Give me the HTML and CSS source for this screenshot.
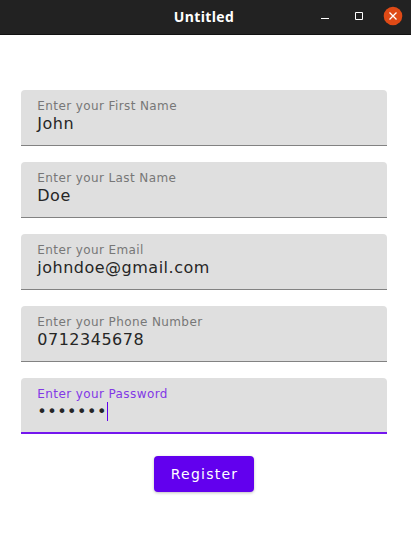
FILE: index.html
```html
<!DOCTYPE html>
<html lang="en">
<head>
<meta charset="utf-8">
<title>Untitled</title>
<link rel="stylesheet" href="styles.css">
</head>
<body>
<header class="titlebar">
  <span class="title">Untitled</span>
  <div class="controls">
    <svg class="icon" viewBox="0 0 20 20"><path d="M6 12.500h8" stroke="#fff" fill="none"/></svg>
    <svg class="icon" viewBox="0 0 20 20"><path d="M6.500 6.500h7v7h-7z" stroke="#fff" fill="none"/></svg>
    <svg class="icon" viewBox="0 0 20 20"><circle cx="10" cy="10" r="9.300" fill="#df4a16"/><path d="M6.500 6.500l7 7M13.500 6.500l-7 7" stroke="#fff" stroke-width="1.300" fill="none"/></svg>
  </div>
</header>
<main class="form">
  <div class="field"><span class="label">Enter your First Name</span><span class="value">John</span></div>
  <div class="field"><span class="label">Enter your Last Name</span><span class="value">Doe</span></div>
  <div class="field"><span class="label">Enter your Email</span><span class="value">johndoe@gmail.com</span></div>
  <div class="field"><span class="label">Enter your Phone Number</span><span class="value">0712345678</span></div>
  <div class="field focused"><span class="label">Enter your Password</span><span class="value">•••••••<i class="caret"></i></span></div>
  <button class="register">Register</button>
</main>
</body>
</html>
```
FILE: styles.css
```css
* { box-sizing: border-box; }
body { margin: 0; height: 553px; background: #fff; font-family: "DejaVu Sans", sans-serif; overflow: hidden; }
.titlebar { display: grid; grid-template-columns: 1fr auto 1fr; align-items: center; height: 35px; background: #222; border-bottom: 1px solid #111; color: #fff; }
.title { grid-column: 2; padding-right: 3px; font: bold 14px/20px "Open Sans", sans-serif; letter-spacing: 0.35px; }
.controls { display: flex; gap: 14px; justify-content: flex-end; padding: 0 8px 2px 0; }
.icon { width: 20px; height: 20px; }
.form { display: flex; flex-direction: column; gap: 16px; padding: 55px 24px 0 21px; }
.field { display: flex; flex-direction: column; height: 56px; padding: 8px 16px 0 16.3px; background: #dfdfdf; border-radius: 4px 4px 0 0; border-bottom: 1px solid #828282; }
.label { font-size: 12px; line-height: 16px; letter-spacing: 0.4px; color: #777; }
.value { display: flex; font-size: 16px; line-height: 19px; letter-spacing: 0.5px; color: #262626; }
.focused { border-bottom: 2px solid #7416ee; }
.focused .label { color: #8238e6; }
.caret { width: 1px; height: 19px; background: #6200ee; }
.register { align-self: center; width: 100px; height: 36px; margin-top: 6px; padding: 0 0 0 1px; border: 0; border-radius: 4px; background: #6200ee; color: #fff; font: 14px "DejaVu Sans", sans-serif; letter-spacing: 1.25px; box-shadow: 0 1px 3px rgba(0,0,0,.25); }
```
